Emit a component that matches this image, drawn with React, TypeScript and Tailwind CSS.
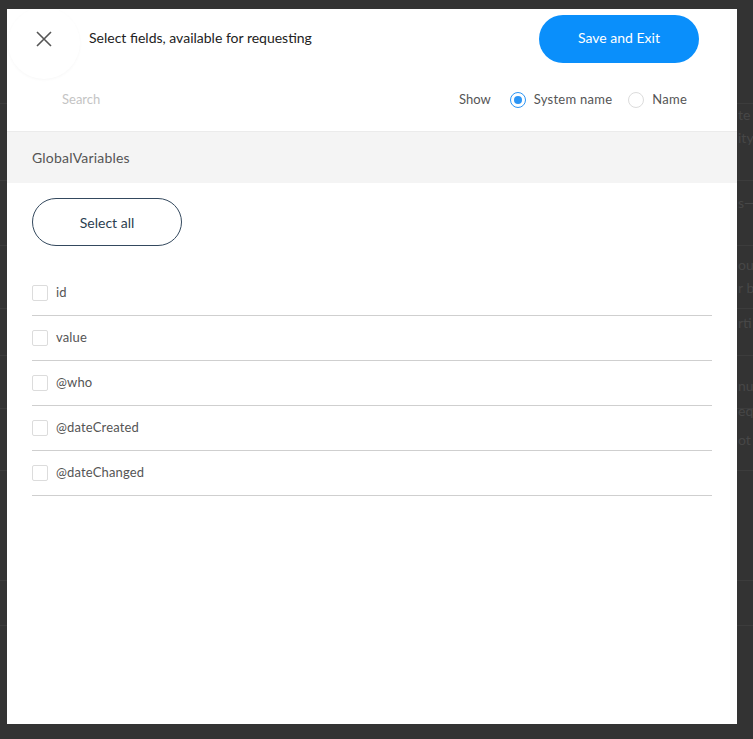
import { useState } from "react";

type Field = { id: string; label: string };

const fields: Field[] = [
  { id: "id", label: "id" },
  { id: "value", label: "value" },
  { id: "who", label: "@who" },
  { id: "dateCreated", label: "@dateCreated" },
  { id: "dateChanged", label: "@dateChanged" },
];

// faint pieces of the page that sits under the modal
const bgLines = [103, 180, 245, 308, 355, 408, 470, 580, 625];
const bgWords = [
  { y: 104, t: "te" },
  { y: 127, t: "ity" },
  { y: 192, t: "s—" },
  { y: 254, t: "ou" },
  { y: 277, t: "r b" },
  { y: 312, t: "rti" },
  { y: 375, t: "nu" },
  { y: 400, t: "equ" },
  { y: 429, t: "ot" },
];

const Radio = ({ checked, label }: { checked: boolean; label: string }) => (
  <label className="flex cursor-pointer items-center">
    <span
      className={`flex h-4 w-4 items-center justify-center rounded-full border ${
        checked ? "border-[#2b95f5]" : "border-[#dcdcdc]"
      }`}
    >
      {checked && <span className="h-2 w-2 rounded-full bg-[#2b95f5]" />}
    </span>
    <span className="ml-2 text-[13px] tracking-[0.25px] text-[#555]">{label}</span>
  </label>
);

const FieldRow = ({ field, checked, onToggle }: { field: Field; checked: boolean; onToggle: () => void }) => (
  <div
    className="flex h-[45px] cursor-pointer items-center border-b border-[#cfcfcf]"
    onClick={onToggle}
  >
    <span className="flex h-4 w-4 items-center justify-center rounded-[2px] border border-[#dcdcdc]">
      {checked && <span className="h-2 w-2 bg-[#0b8ff9]" />}
    </span>
    <span className="ml-2 text-[13px] tracking-[0.15px] text-[#555]">{field.label}</span>
  </div>
);

export default function App() {
  const [selected, setSelected] = useState<string[]>([]);
  const [showSystem, setShowSystem] = useState(true);

  const toggle = (id: string) =>
    setSelected((s) => (s.includes(id) ? s.filter((x) => x !== id) : [...s, id]));

  return (
    <div
      className="relative h-[739px] w-[753px] overflow-hidden bg-[#333333]"
      style={{ fontFamily: "Lato, 'Noto Sans', sans-serif" }}
    >
      {/* underlying page */}
      {bgLines.map((y) => (
        <div key={y} className="absolute left-0 h-px w-full bg-[#3c3c3c]" style={{ top: y }} />
      ))}
      {bgWords.map((w) => (
        <div
          key={w.y}
          className="absolute left-[738px] whitespace-nowrap text-[14px] text-[#474747]"
          style={{ top: w.y }}
        >
          {w.t}
        </div>
      ))}

      {/* modal */}
      <div className="absolute left-[7px] top-[9px] h-[715px] w-[730px] overflow-hidden bg-white">
        <div className="mt-[6px] flex h-[48px] items-center">
          <button className="-mb-4 -mt-2 ml-px flex h-[72px] w-[72px] items-center justify-center rounded-full bg-white pb-2 shadow-[0_1px_3px_rgba(0,0,0,0.035)]">
            <svg width="16" height="16" viewBox="0 0 16 16" fill="none">
              <path d="M1 1L15 15M15 1L1 15" stroke="#555" strokeWidth="1.6" />
            </svg>
          </button>
          <div className="mb-[3px] ml-[9px] text-[14px] text-[#222]">Select fields, available for requesting</div>
          <button className="ml-auto mr-[38px] h-[48px] w-[160px] rounded-full bg-[#0a8ffb] pb-[3px] text-[14px] text-white">
            Save and Exit
          </button>
        </div>

        <div className="flex h-[69px] items-center border-b border-[#ebebeb] pt-[6px]">
          <input
            placeholder="Search"
            className="ml-[55px] w-[200px] text-[13px] text-[#555] outline-none placeholder:text-[#c4c4c4]"
          />
          <div className="ml-auto mr-[50px] flex items-center">
            <span className="mr-[19px] text-[13px] text-[#555]">Show</span>
            <div onClick={() => setShowSystem(true)}>
              <Radio checked={showSystem} label="System name" />
            </div>
            <div className="ml-4" onClick={() => setShowSystem(false)}>
              <Radio checked={!showSystem} label="Name" />
            </div>
          </div>
        </div>

        <div className="flex h-[51px] items-center bg-[#f4f4f4] pl-[25px] text-[14px] tracking-[0.2px] text-[#555]">
          GlobalVariables
        </div>

        <div className="px-[25px]">
          <button
            className="mt-[15px] h-[48px] w-[150px] rounded-full border border-[#34495e] text-[14px] text-[#2c3e50]"
            onClick={() =>
              setSelected(selected.length === fields.length ? [] : fields.map((f) => f.id))
            }
          >
            Select all
          </button>

          <div className="mt-[25px] w-[680px]">
            {fields.map((f) => (
              <FieldRow key={f.id} field={f} checked={selected.includes(f.id)} onToggle={() => toggle(f.id)} />
            ))}
          </div>
        </div>
      </div>
    </div>
  );
}
